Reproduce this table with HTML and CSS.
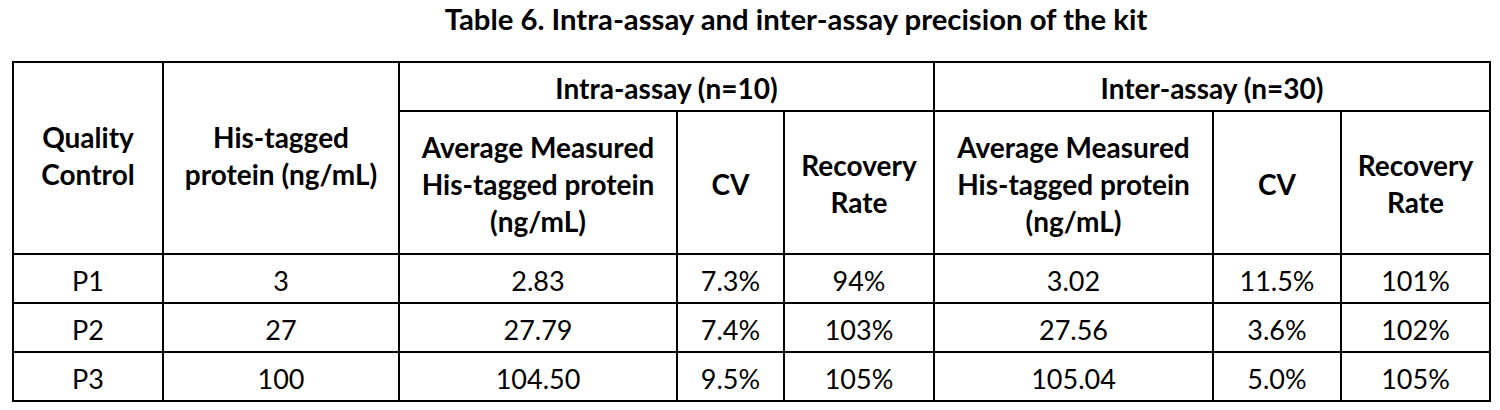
FILE: index.html
```html
<!DOCTYPE html>
<html lang="en">
<head>
<meta charset="utf-8">
<title>Table 6</title>
<link rel="stylesheet" href="styles.css">
</head>
<body>
<div class="page">
  <h1 class="caption">Table 6. Intra-assay and inter-assay precision of the kit</h1>
  <table class="precision">
    <colgroup>
      <col class="c-qc">
      <col class="c-his">
      <col class="c-avg">
      <col class="c-cv">
      <col class="c-rr">
      <col class="c-avg2">
      <col class="c-cv2">
      <col class="c-rr2">
    </colgroup>
    <thead>
      <tr class="h1">
        <th rowspan="2" class="span2">Quality<br>Control</th>
        <th rowspan="2" class="span2">His-tagged<br>protein (ng/mL)</th>
        <th colspan="3">Intra-assay (n=10)</th>
        <th colspan="3">Inter-assay (n=30)</th>
      </tr>
      <tr class="h2">
        <th>Average Measured<br>His-tagged protein<br>(ng/mL)</th>
        <th>CV</th>
        <th>Recovery<br>Rate</th>
        <th>Average Measured<br>His-tagged protein<br>(ng/mL)</th>
        <th>CV</th>
        <th>Recovery<br>Rate</th>
      </tr>
    </thead>
    <tbody>
      <tr>
        <td>P1</td><td>3</td><td>2.83</td><td>7.3%</td><td>94%</td><td>3.02</td><td>11.5%</td><td>101%</td>
      </tr>
      <tr>
        <td>P2</td><td>27</td><td>27.79</td><td>7.4%</td><td>103%</td><td>27.56</td><td>3.6%</td><td>102%</td>
      </tr>
      <tr>
        <td>P3</td><td>100</td><td>104.50</td><td>9.5%</td><td>105%</td><td>105.04</td><td>5.0%</td><td>105%</td>
      </tr>
    </tbody>
  </table>
</div>
</body>
</html>
```
FILE: styles.css
```css
html, body {
  margin: 0;
  padding: 0;
  background: #ffffff;
}

.page {
  width: 1500px;
  height: 410px;
  font-family: "Lato", "Liberation Sans", sans-serif;
  color: #000000;
}

.caption {
  margin: 0;
  padding-left: 92px;
  font-size: 29.3px;
  line-height: 37px;
  font-weight: 700;
  text-align: center;
}

.precision {
  margin: 24px 0 0 12px;
  width: 1479px;
  border-collapse: collapse;
  table-layout: fixed;
}

.c-qc { width: 150px; }
.c-his { width: 236px; }
.c-avg { width: 278px; }
.c-cv { width: 107px; }
.c-rr { width: 150px; }
.c-avg2 { width: 279px; }
.c-cv2 { width: 128px; }
.c-rr2 { width: 149px; }

.precision th,
.precision td {
  border: 2px solid #000000;
  padding: 3px 0 0;
  text-align: center;
  vertical-align: middle;
}

.precision th {
  font-size: 28px;
  font-weight: 700;
  line-height: 37px;
}

.precision th.span2 {
  padding: 0 0 5px;
}

.precision td {
  font-size: 27px;
  font-weight: 400;
  line-height: 33px;
}

.precision tr.h1 { height: 49px; }
.precision tr.h2 { height: 143px; }
.precision tbody tr { height: 49px; }
```
